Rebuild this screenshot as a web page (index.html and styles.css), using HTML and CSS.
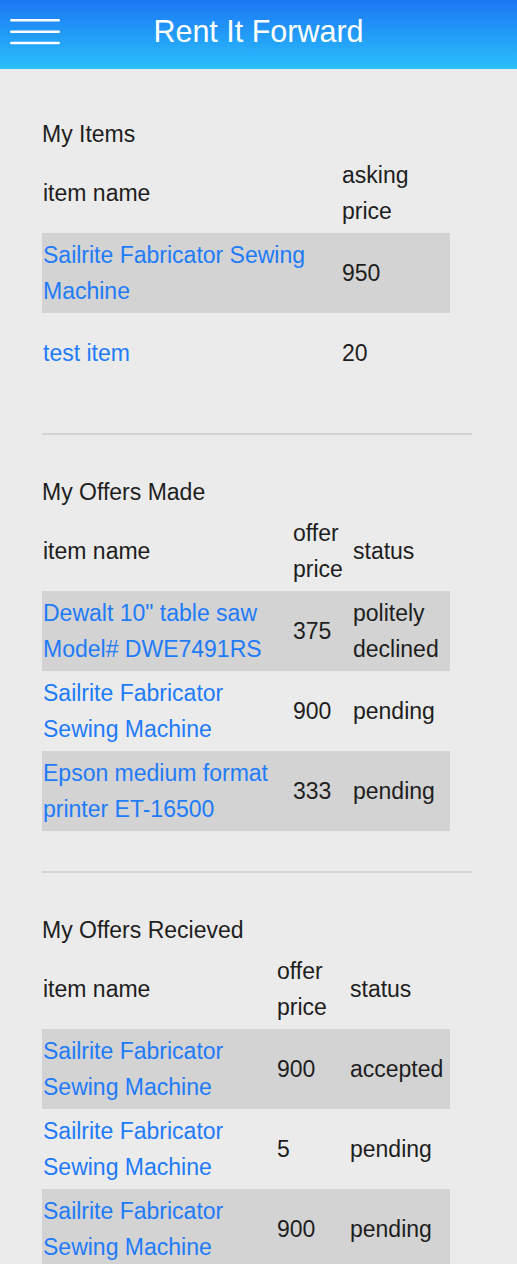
FILE: index.html
```html
<!DOCTYPE html>
<html lang="en">
<head>
<meta charset="utf-8">
<title>Rent It Forward</title>
<link rel="stylesheet" href="styles.css">
</head>
<body>
<header class="topbar">
  <button class="menu-btn" aria-label="menu">
    <svg width="50" height="28" viewBox="0 0 50 28">
      <path d="M1.3 2.3H48.7M1.3 13.7H48.7M1.3 25H48.7" stroke="#fff" stroke-width="2.6" stroke-linecap="round"/>
    </svg>
  </button>
  <h1 class="brand">Rent It Forward</h1>
  <span></span>
</header>
<main class="content">
  <section class="block">
    <h2 class="block-title">My Items</h2>
    <table class="grid t1">
      <colgroup><col class="c1"><col class="c2"></colgroup>
      <tr><td>item name</td><td>asking price</td></tr>
      <tr class="odd"><td><a href="#">Sailrite Fabricator Sewing Machine</a></td><td>950</td></tr>
      <tr><td><a href="#">test item</a></td><td>20</td></tr>
    </table>
  </section>
  <hr class="divider">
  <section class="block">
    <h2 class="block-title">My Offers Made</h2>
    <table class="grid t2">
      <colgroup><col class="c1"><col class="c2"><col class="c3"></colgroup>
      <tr><td>item name</td><td>offer price</td><td>status</td></tr>
      <tr class="odd"><td><a href="#">Dewalt 10" table saw Model# DWE7491RS</a></td><td>375</td><td>politely declined</td></tr>
      <tr><td><a href="#">Sailrite Fabricator Sewing Machine</a></td><td>900</td><td>pending</td></tr>
      <tr class="odd"><td><a href="#">Epson medium format printer ET-16500</a></td><td>333</td><td>pending</td></tr>
    </table>
  </section>
  <hr class="divider">
  <section class="block">
    <h2 class="block-title">My Offers Recieved</h2>
    <table class="grid t3">
      <colgroup><col class="c1"><col class="c2"><col class="c3"></colgroup>
      <tr><td>item name</td><td>offer price</td><td>status</td></tr>
      <tr class="odd"><td><a href="#">Sailrite Fabricator Sewing Machine</a></td><td>900</td><td>accepted</td></tr>
      <tr><td><a href="#">Sailrite Fabricator Sewing Machine</a></td><td>5</td><td>pending</td></tr>
      <tr class="odd"><td><a href="#">Sailrite Fabricator Sewing Machine</a></td><td>900</td><td>pending</td></tr>
    </table>
  </section>
</main>
</body>
</html>
```
FILE: styles.css
```css
* { box-sizing: border-box; }
html, body { margin: 0; padding: 0; }
body {
  background: #ebebeb;
  font-family: "Liberation Sans", Arial, sans-serif;
  color: #1e1e1e;
  font-size: 23px;
  line-height: 36px;
}
.topbar {
  height: 69px;
  display: grid;
  grid-template-columns: 1fr auto 1fr;
  align-items: start;
  background: linear-gradient(to bottom, #1b77f4 0%, #2abffb 100%);
}
.menu-btn {
  margin: 18px 0 0 10px;
  padding: 0;
  border: 0;
  background: none;
  width: 50px;
  height: 28px;
  justify-self: start;
}
.menu-btn svg { display: block; }
.brand {
  margin: 13px 0 0;
  font-weight: normal;
  font-size: 30.5px;
  line-height: 36px;
  color: #fff;
}
.content {
  padding: 47px 45px 0 42px;
}
.block-title {
  margin: 0 0 1px;
  font-size: 23px;
  line-height: 36px;
  font-weight: normal;
}
.grid {
  width: 408px;
  border-collapse: collapse;
  table-layout: fixed;
}
.grid td {
  height: 80px;
  padding: 4px 1px;
  vertical-align: middle;
}
.grid tr.odd { background: #d3d3d3; }
.grid a { color: #1f7bf8; text-decoration: none; }
.t1 .c1 { width: 299px; }
.t1 .c2 { width: 109px; }
.t2 .c1 { width: 250px; }
.t2 .c2 { width: 60px; }
.t2 .c3 { width: 98px; }
.t3 .c1 { width: 234px; }
.t3 .c2 { width: 73px; }
.t3 .c3 { width: 101px; }
.divider {
  margin: 40px 0 39px;
  border: 0;
  height: 2px;
  background: #d3d3d3;
}
```
